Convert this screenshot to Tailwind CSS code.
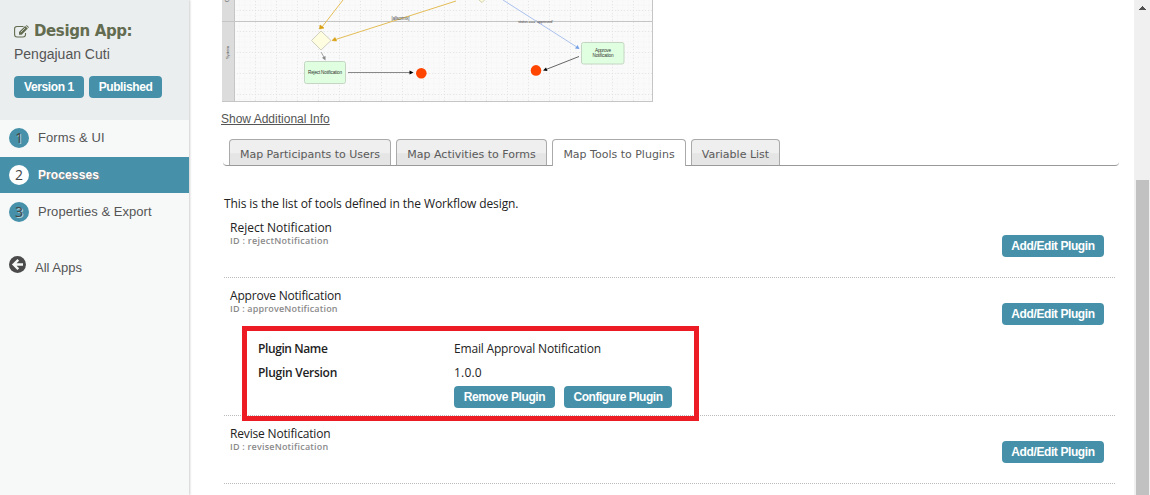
<!DOCTYPE html>
<html lang="en">
<head>
<meta charset="utf-8">
<title>Design App</title>
<script src="https://cdn.jsdelivr.net/npm/@tailwindcss/browser@4"></script>
</head>
<body class="h-[495px] overflow-hidden bg-white">
<div class="flex h-[495px] w-[1150px] overflow-hidden font-['Liberation_Sans',sans-serif]">

  <aside class="relative z-10 flex h-full w-[189px] shrink-0 flex-col bg-[#f7f9f9] text-[13px] text-[#555] shadow-[1px_0_2px_rgba(0,0,0,0.2)]">
    <header class="h-[120px] bg-[#ebeeef] pt-[21px] pl-[14px]">
      <div class="flex h-5 items-center gap-[5px]">
        <svg class="h-[13px] w-[15px] shrink-0" viewBox="0 0 15 13" fill="none" stroke="#636c50">
          <path d="M9.500 1.500H3Q.6 1.500 .6 3.800V9.600Q.6 12 3 12H9Q11.500 12 11.500 9.600V8" stroke-width="1.1"/>
          <path d="M5 9.800V7.100L11.100 1L13.800 3.600L7.700 9.800Z" fill="#636c50" stroke="none"/>
          <path d="M11.700.6Q12.400-.2 13.200.5L14.500 1.800Q15.100 2.500 14.400 3.100Z" fill="#636c50" stroke="none"/>
          <path d="M6.800 7.200L11 3" stroke="#ebeeef" stroke-width=".7"/>
        </svg>
        <h1 class="font-['DejaVu_Sans',sans-serif] text-[15px] leading-5 font-bold tracking-[-0.38px] whitespace-nowrap text-[#636c50]">Design App:</h1>
      </div>
      <p class="mt-[3px] text-[14px] leading-5 text-[#555]">Pengajuan Cuti</p>
      <div class="mt-3 flex gap-[5px] text-[12px] leading-[22px] font-bold tracking-[-0.4px] text-white">
        <span class="h-[22px] w-[70px] rounded bg-[#4691a9] text-center">Version 1</span>
        <span class="h-[22px] w-[73px] rounded bg-[#4691a9] text-center">Published</span>
      </div>
    </header>
    <nav class="flex flex-col">
      <a class="flex h-[37px] items-center gap-[9px] pb-[1px] pl-[9px] tracking-[0.1px]"><span class="h-5 w-5 rounded-full bg-[#4691a9] text-center font-['Open_Sans',sans-serif] text-[14px] leading-5 text-[#444] [text-shadow:1px_1px_0_rgba(255,255,255,0.6)]">1</span>Forms &amp; UI</a>
      <a class="flex h-9 items-center gap-[9px] bg-[#4691a9] pl-[9px] text-[12px] font-bold tracking-[0.1px] text-white [text-shadow:1px_1px_0_#888]"><span class="h-5 w-5 rounded-full bg-white text-center font-['Open_Sans',sans-serif] text-[14px] leading-5 font-normal text-[#444] [text-shadow:none]">2</span>Processes</a>
      <a class="flex h-[37px] items-center gap-[9px] pl-[9px]"><span class="h-5 w-5 rounded-full bg-[#4691a9] text-center font-['Open_Sans',sans-serif] text-[14px] leading-5 text-[#444] [text-shadow:1px_1px_0_rgba(255,255,255,0.6)]">3</span><span class="tracking-[0.05px]">Properties &amp; Export</span></a>
      <a class="mt-[25px] flex h-6 items-start gap-[9px] pl-[9px]">
        <svg class="mt-[1px] h-[17px] w-[17px]" viewBox="0 0 17 17"><circle cx="8.5" cy="8.5" r="8.5" fill="#4b4b4b"/><path d="M9.300 3.800L4.600 8.500L9.300 13.200M5 8.500H14" fill="none" stroke="#f7f9f9" stroke-width="2.4"/></svg>
        <span class="pt-[3px] leading-5">All Apps</span>
      </a>
    </nav>
  </aside>

  <main class="flex min-w-0 flex-1 flex-col overflow-hidden pl-[33px] font-['Open_Sans',sans-serif] text-[12px] text-[#222]">
    <svg class="h-[102px] w-[431px] shrink-0" viewBox="222 0 431 102">
      <defs>
        <pattern id="minor" width="5.25" height="5.25" patternUnits="userSpaceOnUse" x="234" y="31"><path d="M.5 0V5.250M0 .5H5.250" stroke="#f1f1f1" stroke-width=".6" stroke-dasharray="1 1.2"/></pattern>
        <pattern id="major" width="21" height="21" patternUnits="userSpaceOnUse" x="234" y="31"><path d="M.5 0V21M0 .5H21" stroke="#e2e2e2" stroke-width=".8" stroke-dasharray="1 2"/></pattern>
      </defs>
      <rect x="222" y="0" width="431" height="102" fill="#fafafa"/>
      <rect x="222" y="0" width="431" height="102" fill="url(#minor)"/>
      <rect x="222" y="0" width="431" height="102" fill="url(#major)"/>
      <rect x="222" y="0" width="12" height="102" fill="#dcdcdc"/>
      <path d="M234.500 0V101M222 21.500H653M222 101.500H653M652.500 0V102" fill="none" stroke="#c5c5c5"/>
      <text transform="translate(229 59) rotate(-90)" font-family="Liberation Sans" font-size="4.2" textLength="13" fill="#555">System</text>
      <text transform="translate(229 2) rotate(-90)" font-family="Liberation Sans" font-size="4.5" fill="#555">C</text>
      <path d="M343 0L322 27M456 1L334 40" stroke="#e5bd57" fill="none"/>
      <path d="M319.500 29L320 25L324 28ZM332 40.500L335 37.500L336.500 41Z" fill="#d99f10" stroke="#d99f10" stroke-width=".6"/>
      <path d="M321 31L331 40.500L321 50L311.500 40.500Z" fill="#fffde0" stroke="#cfcfc0"/>
      <path d="M479 0L482 2.500L484.500 0" fill="#fffde0" stroke="#cfcfaa"/>
      <path d="M321 52L324.500 58" stroke="#a5a5a5"/><path d="M325.500 60.500L322 57.800L325.500 56Z" fill="#888"/>
      <path d="M503 0L576 46.500" stroke="#aac2ed"/><path d="M579.500 49L575 48.500L577.500 45Z" fill="#719de6"/>
      <text x="391.500" y="20.300" font-family="Liberation Sans" font-size="4.6" textLength="18" fill="#555">[allscrmix]</text>
      <text x="518" y="23" font-family="Liberation Sans" font-size="4.2" textLength="35" fill="#555">status === 'approved'</text>
      <rect x="304.500" y="61.500" width="41" height="22" rx="2" fill="#e0ffe0" stroke="#c4d5c4"/>
      <text x="325" y="73.800" text-anchor="middle" font-family="Liberation Sans" font-size="4.7" textLength="34" fill="#333">Reject Notification</text>
      <path d="M348 72.500H410" stroke="#888"/><path d="M409.500 70.500L413.500 72.500L409.500 74.500Z" fill="#000"/>
      <circle cx="421.300" cy="73.200" r="5.300" fill="#ff4500"/>
      <rect x="581.500" y="42.500" width="42.500" height="21.500" rx="2" fill="#e0ffe0" stroke="#c4d5c4"/>
      <text x="603" y="52" text-anchor="middle" font-family="Liberation Sans" font-size="4.7" textLength="16" fill="#333">Approve</text>
      <text x="603" y="57" text-anchor="middle" font-family="Liberation Sans" font-size="4.7" textLength="21" fill="#333">Notification</text>
      <path d="M579 56.500L546 69.500" stroke="#555" stroke-width=".9"/><path d="M543 70.500L546 67.500L547.500 71Z" fill="#000"/>
      <circle cx="536" cy="70.400" r="5.300" fill="#ff4500"/>
    </svg>

    <a class="mt-2 -ml-[1px] h-[18px] self-start font-['Liberation_Sans',sans-serif] text-[12px] leading-[18px] whitespace-nowrap text-[#555] underline">Show Additional Info</a>

    <div class="mt-[11px] ml-[1px] flex h-[27px] w-[896px] shrink-0 items-end gap-[5px] rounded-b border-b border-[#999] pl-[6px] font-['DejaVu_Sans',sans-serif] text-[11px] leading-[29px] text-[#5a5a5a]">
      <span class="h-[26px] w-[162px] rounded-t border border-b-0 border-[#aaa] bg-linear-to-b from-[#efefef] from-50% to-[#e5e5e5] to-55% text-center whitespace-nowrap">Map Participants to Users</span>
      <span class="h-[26px] w-[151px] rounded-t border border-b-0 border-[#aaa] bg-linear-to-b from-[#efefef] from-50% to-[#e5e5e5] to-55% text-center whitespace-nowrap">Map Activities to Forms</span>
      <span class="-mb-[1px] h-[27px] w-[134px] rounded-t border border-b-0 border-[#aaa] bg-white text-center whitespace-nowrap">Map Tools to Plugins</span>
      <span class="h-[26px] w-[89px] rounded-t border border-b-0 border-[#aaa] bg-linear-to-b from-[#efefef] from-50% to-[#e5e5e5] to-55% text-center whitespace-nowrap">Variable List</span>
    </div>

    <section class="ml-[2px] flex w-[891px] flex-col pt-[27px]">
      <p class="h-5 leading-[21px] tracking-[-0.1px]">This is the list of tools defined in the Workflow design.</p>

      <article class="flex h-[65px] justify-between border-b border-dotted border-[#bbb] pt-[7px] pr-[11px] pl-[6px]">
        <div>
          <h2 class="leading-4">Reject Notification</h2>
          <p class="text-[9px] leading-[10px] font-semibold tracking-[0.27px] text-[#8a8a8a]">ID : rejectNotification</p>
        </div>
        <button class="mt-[15px] h-[22px] w-[102px] rounded bg-[#4691a9] font-['Liberation_Sans',sans-serif] leading-[22px] font-bold tracking-[-0.4px] text-white">Add/Edit Plugin</button>
      </article>

      <article class="relative h-[138px] border-b border-dotted border-[#bbb] pt-[10px] pr-[11px] pl-[6px]">
        <div class="flex h-[49px] justify-between">
          <div>
            <h2 class="leading-4 tracking-[-0.2px]">Approve Notification</h2>
            <p class="text-[9px] leading-[10px] font-semibold tracking-[0.17px] text-[#8a8a8a]">ID : approveNotification</p>
          </div>
          <button class="mt-[15px] h-[22px] w-[102px] rounded bg-[#4691a9] font-['Liberation_Sans',sans-serif] leading-[22px] font-bold tracking-[-0.4px] text-white">Add/Edit Plugin</button>
        </div>
        <dl class="grid grid-cols-[196px_1fr] pl-7 leading-6">
          <dt class="font-semibold tracking-[-0.4px]">Plugin Name</dt><dd class="tracking-[-0.18px]">Email Approval Notification</dd>
          <dt class="font-semibold tracking-[-0.27px]">Plugin Version</dt><dd class="tracking-[0.2px]">1.0.0</dd>
        </dl>
        <div class="mt-[1px] ml-56 flex gap-[9px] font-['Liberation_Sans',sans-serif] leading-[22px] font-bold tracking-[-0.4px] text-white">
          <button class="h-[22px] w-[101px] rounded bg-[#4691a9]">Remove Plugin</button>
          <button class="h-[22px] w-[108px] rounded bg-[#4691a9] tracking-[-0.48px]">Configure Plugin</button>
        </div>
        <div class="absolute top-[48px] left-[18px] h-[95px] w-[457px] border-[5px] border-[#ed1c24]"></div>
      </article>

      <article class="flex h-[68px] justify-between border-b border-dotted border-[#bbb] pt-[10px] pr-[11px] pl-[6px]">
        <div>
          <h2 class="leading-4 tracking-[-0.17px]">Revise Notification</h2>
          <p class="text-[9px] leading-[10px] font-semibold tracking-[0.2px] text-[#8a8a8a]">ID : reviseNotification</p>
        </div>
        <button class="mt-[15px] h-[22px] w-[102px] rounded bg-[#4691a9] font-['Liberation_Sans',sans-serif] leading-[22px] font-bold tracking-[-0.4px] text-white">Add/Edit Plugin</button>
      </article>
    </section>
  </main>

  <div class="flex w-4 shrink-0 flex-col items-center bg-[#f0f0f0]">
    <svg class="mt-[6px] h-1 w-[7px] shrink-0" viewBox="0 0 7 4" shape-rendering="crispEdges"><path d="M3 0H4V1H5V2H6V3H7V4H0V3H1V2H2V1H3Z" fill="#505050"/></svg>
    <div class="mt-[170px] h-[315px] w-[13px] shrink-0 bg-[#c1c1c1]"></div>
  </div>
</div>
</body>
</html>
